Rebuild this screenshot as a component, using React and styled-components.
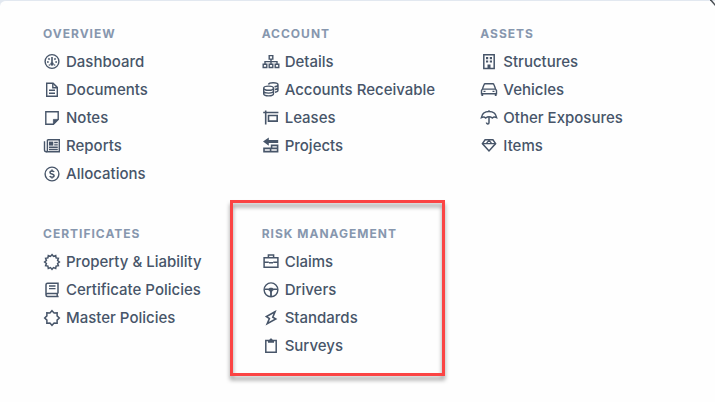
import React from "react";
import styled, { createGlobalStyle } from "styled-components";

// points of a star centred in the 18x18 icon box
const star = (count, outer, inner) =>
  Array.from({ length: count * 2 }, (_, i) => {
    const angle = (Math.PI * i) / count - Math.PI / 2;
    const r = i % 2 ? inner : outer;
    return `${(9 + r * Math.cos(angle)).toFixed(2)},${(9 + r * Math.sin(angle)).toFixed(2)}`;
  }).join(" ");

const icons = {
  dashboard: (
    <>
      <circle cx="9" cy="8.5" r="6.9" />
      <path d="M9 4V10" strokeWidth="1.6" />
      <circle cx="9" cy="11" r="1.8" fill="currentColor" stroke="none" />
      <path d="M4 9h1.7M12.3 9H14M5.4 5.4l1.2 1.2M12.6 5.4l-1.2 1.2M5.8 12h1M11.2 12h1" strokeWidth="1.5" />
    </>
  ),
  document: (
    <>
      <path d="M3.7 2.2h6.4l4.2 4.2v8.8H3.7z" />
      <path d="M9.8 2.4v4.3h4.3M6 9.3h6M6 12.2h6" />
    </>
  ),
  note: (
    <>
      <path d="M2.8 2.8h12.4v7.6l-4.8 4.8H2.8z" />
      <path d="M15.2 10.4h-4.8v4.8z" fill="currentColor" strokeWidth="0.8" />
    </>
  ),
  report: (
    <>
      <path d="M4.4 2.7h11.9v12H3.2c-1.2 0-1.7-.6-1.7-1.7V4.2" />
      <path d="M4.4 2.7v10.5c0 .9-.4 1.5-1.2 1.5" />
      <path d="M6 4.6h4.3v4H6z" fill="currentColor" stroke="none" />
      <path d="M11.2 5.5h3.6M11.2 7.9h3.6M6 10.3h8.8M6 12.5h8.8" />
    </>
  ),
  dollar: (
    <>
      <circle cx="9" cy="9" r="6.9" />
      <path d="M11.1 7.1c-.3-.8-1-1.2-2.1-1.2-1.2 0-2 .6-2 1.5 0 2.2 4.1 1 4.1 3.2 0 1-.9 1.6-2.1 1.6-1.1 0-1.9-.5-2.2-1.3M9 4.5v1.4M9 12.2v1.4" strokeWidth="1.5" />
    </>
  ),
  sitemap: (
    <>
      <path d="M7.2 2.6h3.6v3.5H7.2zM1.2 11.2h3.6v3.3H1.2zM7.2 11.2h3.6v3.3H7.2zM13.2 11.2h3.6v3.3h-3.6z" />
      <path d="M9 6.1v5M3 11V8.6h12V11" />
    </>
  ),
  coins: (
    <>
      <ellipse cx="6.6" cy="7.2" rx="4.9" ry="2.1" />
      <path d="M1.7 7.2v5.6c0 1.2 2.2 2.1 4.9 2.1s4.9-.9 4.9-2.1V7.2M1.7 10c0 1.2 2.2 2.1 4.9 2.1s4.9-.9 4.9-2.1" />
      <path d="M6.4 3.5c.4-1 2.3-1.7 4.7-1.7 2.7 0 4.9.8 4.9 2s-1.4 1.8-3.5 2M16 3.8v5.5c0 1-1.2 1.7-3 2M16 6.5c0 1-1.3 1.8-3.2 2" />
    </>
  ),
  sign: <path d="M3.7 1.4v14.2M1.2 3.5h15.2M6.5 6.5h8.7v5.6H6.5z" strokeWidth="1.6" />,
  bricks: (
    <>
      <path d="M1 4.6 6.8.4v2.7h9.4v3H6.8v2.7z" fill="currentColor" stroke="none" />
      <path d="M9.6 8.4h6v3h-6zM2 11.4h6.6v3.2H2zM8.6 11.4h7v3.2h-7z" strokeWidth="1.6" />
    </>
  ),
  building: (
    <>
      <path d="M3.8 1.8h10.4v13.6H3.8z" strokeWidth="1.5" />
      <path d="M6 4.1h2.2v2.1H6zM9.8 4.1H12v2.1H9.8zM6 7.5h2.2v2.1H6zM9.8 7.5H12v2.1H9.8zM7.5 11.4h3v4h-3z" fill="currentColor" stroke="none" />
    </>
  ),
  car: (
    <>
      <path d="M2.4 8.1 4 3.7c.2-.6.6-.9 1.2-.9h7.6c.6 0 1 .3 1.2.9l1.6 4.4M2.4 8.1h13.2l.9 1.4v3.3h-15V9.5z" />
      <path d="M2.3 12.8v2.1M15.7 12.8v2.1" strokeWidth="1.8" />
      <path d="M3.5 10.4h2M12.5 10.4h2" />
    </>
  ),
  umbrella: (
    <>
      <path d="M9 2.5V1.2M1.4 8.6C2 5 5 2.6 9 2.6s7 2.4 7.6 6c-1.6-1-3-.9-4.3.4-1.1-.9-2.2-1.3-3.3-1.3S6.800 8.100 5.700 9C4.400 7.700 3 7.600 1.400 8.600z" strokeWidth="1.500" />
      <path d="M9 8v5.400c0 2-2.500 1.900-2.500.2" strokeWidth="1.500" />
    </>
  ),
  gem: (
    <>
      <path d="M5.100 2.700h7.800l2.700 3.900L9 13.900 2.400 6.600z" strokeWidth="1.500" />
      <path d="M2.400 6.600h13.200M6.300 6.600 9 3.200l2.700 3.400" strokeWidth="1.300" />
    </>
  ),
  seal: <polygon points={star(12, 7.4, 5.8)} strokeWidth="1.500" />,
  book: (
    <>
      <path d="M15 12.400V2.200H4.600c-1 0-1.600.6-1.600 1.600V14c0 1 .6 1.500 1.600 1.500h11M3 14c0-1.100.6-1.600 1.600-1.600H15M14.200 12.500v3" strokeWidth="1.500" />
      <path d="M6 5h6.500M6 7.600h6.500" />
    </>
  ),
  badge: <polygon points={star(8, 7.3, 5.5)} strokeWidth="1.500" />,
  briefcase: (
    <>
      <path d="M2.100 4.700h13.800v9.500H2.100zM6.400 4.500V2.100h5.200v2.400" strokeWidth="1.500" />
      <path d="M2.100 9.300h4.700M11.200 9.300h4.700M7 9.800h4" strokeWidth="1.600" />
    </>
  ),
  wheel: (
    <>
      <circle cx="9" cy="8.800" r="6.900" />
      <path d="M2.400 7.600h4.400l1-.9h2.400l1 .9h4.400v1.500h-3.300c-1.400 0-2.200 1-2.400 2.400v4H8.100v-4C7.900 10.100 7.100 9.100 5.700 9.100H2.400z" fill="currentColor" stroke="none" />
    </>
  ),
  bolt: <path d="M13 2.800 4.400 7.600l3 1.900-2.200 5.300 8.600-4.800-3-1.900z" strokeWidth="1.600" />,
  clipboard: (
    <>
      <path d="M3.800 3.600h10.400v11.600H3.800z" strokeWidth="1.500" />
      <path d="M6 3.100h1.500c0-2 3-2 3 0H12v2.600H6z" fill="currentColor" stroke="none" />
    </>
  ),
};

const sections = [
  {
    title: "Overview",
    links: [
      ["Dashboard", "dashboard"],
      ["Documents", "document"],
      ["Notes", "note"],
      ["Reports", "report"],
      ["Allocations", "dollar"],
    ],
  },
  {
    title: "Account",
    links: [
      ["Details", "sitemap"],
      ["Accounts Receivable", "coins"],
      ["Leases", "sign"],
      ["Projects", "bricks"],
    ],
  },
  {
    title: "Assets",
    links: [
      ["Structures", "building"],
      ["Vehicles", "car"],
      ["Other Exposures", "umbrella"],
      ["Items", "gem"],
    ],
  },
  {
    title: "Certificates",
    links: [
      ["Property & Liability", "seal"],
      ["Certificate Policies", "book"],
      ["Master Policies", "badge"],
    ],
  },
  {
    title: "Risk Management",
    highlighted: true,
    links: [
      ["Claims", "briefcase"],
      ["Drivers", "wheel"],
      ["Standards", "bolt"],
      ["Surveys", "clipboard"],
    ],
  },
];

const App = () => {
  return (
    <>
      <GlobalStyle />
      <Menu>
        {sections.map((section) => (
          <Section key={section.title} $highlighted={section.highlighted}>
            <Title>{section.title}</Title>
            <List>
              {section.links.map(([label, icon]) => (
                <li key={label}>
                  <MenuLink href="#">
                    <Icon viewBox="0 0 18 18" aria-hidden="true">
                      {icons[icon]}
                    </Icon>
                    {label}
                  </MenuLink>
                </li>
              ))}
            </List>
          </Section>
        ))}
        <Corner viewBox="0 0 5 6" aria-hidden="true">
          <path d="M0 -1 6 6" />
        </Corner>
      </Menu>
    </>
  );
};

const GlobalStyle = createGlobalStyle`
  * {
    box-sizing: border-box;
  }
  body {
    margin: 0;
    background: #e2e8f0;
    font-family: Inter, "Liberation Sans", sans-serif;
  }
`;

const Menu = styled.nav`
  position: relative;
  min-height: 100vh;
  padding: 19px 43px 32px;
  display: grid;
  grid-template-columns: repeat(3, minmax(0, 1fr));
  align-content: start;
  gap: 32px 27px;
  background: #fefefe;
  border-top: 1px solid #e2e8f0;
  border-top-left-radius: 6px;
`;

const Section = styled.section`
  position: relative;

  /* red frame round the highlighted group */
  &::after {
    content: ${(props) => (props.$highlighted ? '""' : "none")};
    position: absolute;
    inset: -20px 8px -16px -32px;
    border: 3px solid #fb4444;
    filter: drop-shadow(0 4px 2px rgba(0, 0, 0, 0.4));
    pointer-events: none;
  }
`;

const Title = styled.h2`
  margin: 0;
  font-size: 12px;
  font-weight: 700;
  line-height: 28px;
  letter-spacing: 1px;
  text-transform: uppercase;
  color: #8797ae;
`;

const List = styled.ul`
  margin: 0;
  padding: 0;
  list-style: none;
`;

const MenuLink = styled.a`
  display: flex;
  align-items: center;
  gap: 5px;
  font-size: 15px;
  font-weight: 500;
  line-height: 28px;
  color: #475569;
  text-decoration: none;
  white-space: nowrap;

  &:hover {
    color: #1e293b;
  }
`;

const Icon = styled.svg`
  width: 18px;
  height: 18px;
  flex-shrink: 0;
  fill: none;
  stroke: currentColor;
  stroke-width: 1.4;
`;

const Corner = styled.svg`
  position: absolute;
  top: -1px;
  right: 0;
  width: 5px;
  height: 6px;
  fill: none;
  stroke: #4b5055;
  stroke-width: 1.5;
`;

export default App;
